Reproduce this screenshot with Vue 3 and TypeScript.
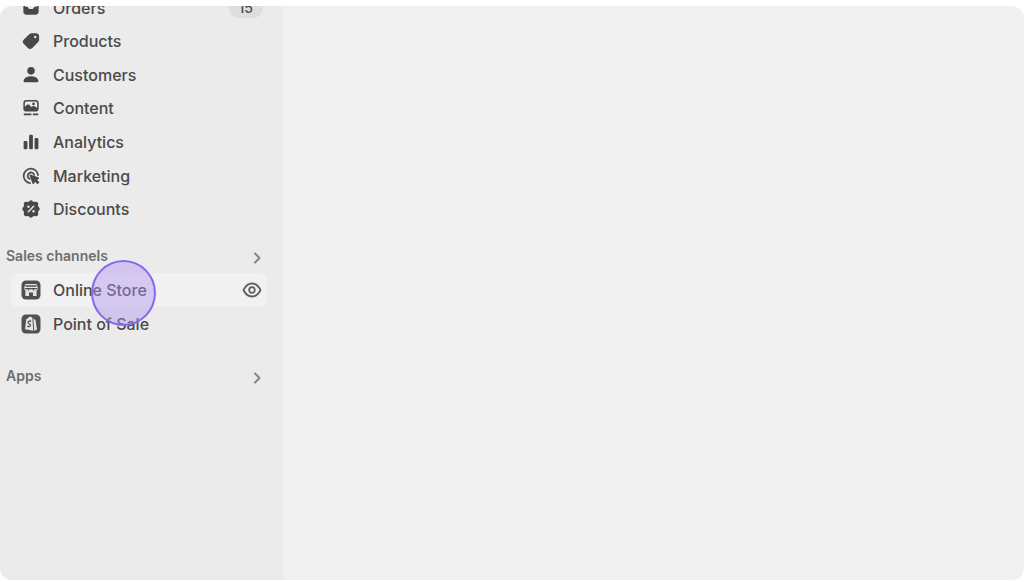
<script setup lang="ts">
type IconName = 'orders' | 'products' | 'customers' | 'content' | 'analytics' | 'marketing' | 'discounts'

interface NavItem {
  label: string
  icon: IconName
  count?: number
}

const items: NavItem[] = [
  { label: 'Orders', icon: 'orders', count: 15 },
  { label: 'Products', icon: 'products' },
  { label: 'Customers', icon: 'customers' },
  { label: 'Content', icon: 'content' },
  { label: 'Analytics', icon: 'analytics' },
  { label: 'Marketing', icon: 'marketing' },
  { label: 'Discounts', icon: 'discounts' },
]
</script>

<template>
  <div class="frame">
    <aside class="sidebar">
      <nav class="list main" aria-label="Main">
        <a v-for="item in items" :key="item.label" class="row" href="#">
          <svg class="icon" viewBox="0 0 20 20" aria-hidden="true">
            <path v-if="item.icon === 'orders'" fill-rule="evenodd" d="M5 1.500h10A3.500 3.500 0 0 1 18.500 5v9a3.500 3.500 0 0 1-3.500 3.500H5A3.500 3.500 0 0 1 1.500 14V5A3.500 3.500 0 0 1 5 1.500Zm0 2A1.500 1.500 0 0 0 3.500 5v3.500H6l2 2.500h4L14 8.500h2.500V5A1.500 1.500 0 0 0 15 3.500Z" />
            <path v-else-if="item.icon === 'products'" fill-rule="evenodd" d="M11.500 1.500H15.500A3.500 3.500 0 0 1 19 5V8.500C19 9.700 18.500 10.700 17.700 11.500L11.500 17.700A3.500 3.500 0 0 1 6.500 17.700L2.100 13.300A3.500 3.500 0 0 1 2.100 8.300L7.800 2.900C8.800 1.900 10 1.500 11.500 1.500ZM14.700 4.300a1.300 1.300 0 1 0 0 2.600 1.300 1.300 0 0 0 0-2.600Z" />
            <template v-else-if="item.icon === 'customers'">
              <circle cx="10" cy="5.400" r="4.200" />
              <path d="M1.800 16.200C2.800 13 5.800 11.500 10 11.500s7.200 1.500 8.200 4.700c.3 1-.4 1.800-1.400 1.800H3.200c-1 0-1.700-.8-1.400-1.800Z" />
            </template>
            <template v-else-if="item.icon === 'content'">
              <path fill-rule="evenodd" d="M5 1h10a3.500 3.500 0 0 1 3.500 3.500v6A3.500 3.500 0 0 1 15 14H5a3.500 3.500 0 0 1-3.500-3.500v-6A3.500 3.500 0 0 1 5 1Zm0 1.700c-1 0-1.800.8-1.800 1.800v4l2.300-2c.8-.7 1.700-.7 2.500 0L10.500 9l1.300-.9c.7-.5 1.500-.5 2.200 0l2.800 2V4.500c0-1-.8-1.800-1.800-1.800Z" />
              <circle cx="12.800" cy="5.500" r="1.500" />
              <path d="M2 16h8.500v2H2zM12 16h6v2h-6z" />
            </template>
            <template v-else-if="item.icon === 'analytics'">
              <rect x="1.800" y="9" width="4.200" height="9" rx="1.300" />
              <rect x="7.900" y="2" width="4.200" height="16" rx="1.300" />
              <rect x="14" y="5.500" width="4.200" height="12.500" rx="1.300" />
            </template>
            <template v-else-if="item.icon === 'marketing'">
              <path class="line" d="M9 17.800A8 8 0 1 1 17.800 9M8.500 13.200a3.700 3.700 0 1 1 5-4.500" />
              <path d="M9.200 8.400 18.600 11.600c.7.300.7 1.200 0 1.500l-1.800 1 2.600 2.800-2.200 2.300-2.900-2.700-1 2c-.3.700-1.200.7-1.500 0L8.300 9.300c-.2-.6.300-1.100.9-.9Z" />
            </template>
            <template v-else>
              <path d="M7.800 1.800Q10-1 12.200 1.800L13.200 2.200 15 2Q18.200 1.800 18 5L17.800 6.800 18.500 7.900Q21 10 18.500 12.100L17.800 13.200 18 15Q18.200 18.200 15 18L13.200 17.800 12.200 18.400Q10 21 7.800 18.400L6.800 17.800 5 18Q1.800 18.200 2 15L2.200 13.200 1.500 12.100Q-1 10 1.500 7.900L2.200 6.800 2 5Q1.800 1.800 5 2L6.800 2.200Z" />
              <path class="cut" d="m7 13 6-6" />
              <circle class="hole" cx="7.200" cy="7.500" r="1.300" />
              <circle class="hole" cx="12.800" cy="12.500" r="1.300" />
            </template>
          </svg>
          <span>{{ item.label }}</span>
          <span v-if="item.count" class="count">{{ item.count }}</span>
        </a>
      </nav>

      <button class="heading" type="button">
        <span>Sales channels</span>
        <svg class="chevron" viewBox="0 0 12 12" aria-hidden="true"><path d="m4 1.500 4.500 4.500L4 10.500" /></svg>
      </button>
      <nav class="list channels" aria-label="Sales channels">
        <div class="row selected">
          <a class="store" href="#">
            <svg class="icon" viewBox="0 0 20 20" aria-hidden="true">
              <rect x=".5" y=".5" width="19" height="19" rx="4.500" />
              <path class="hole" fill-rule="evenodd" d="M4.500 4h11L17 8.200c0 1-.5 1.800-1.400 2.200V16H12v-3.500H8V16H4.400v-5.600C3.500 10 3 9.200 3 8.200Z" />
              <path class="detail" d="M4.500 6h11M3.500 8.700h13M7.500 8.500v2M12.500 8.500v2" />
            </svg>
            <span>Online Store</span>
          </a>
          <button class="view" type="button" aria-label="View online store">
            <svg viewBox="0 0 20 20" aria-hidden="true">
              <path d="M1.500 10C3.500 5.800 6.300 3.500 10 3.500S16.500 5.800 18.500 10c-2 4.200-4.800 6.500-8.500 6.500S3.500 14.200 1.500 10Z" />
              <circle cx="10" cy="10" r="2.800" />
            </svg>
          </button>
        </div>
        <a class="row" href="#">
          <svg class="icon" viewBox="0 0 20 20" aria-hidden="true">
            <rect x=".5" y=".5" width="19" height="19" rx="4.500" />
            <path class="hole" d="m5.300 5 1.500-.4C7.500 3 8.500 2.500 9.600 3l1.700.2 1 13.500L4 15.300ZM12.300 4.500l2.300 1.700 1.400 9.500-2.700 1Z" />
            <path class="detail" d="M10.200 7.300C8.600 6.500 7 7.400 7.200 8.600c.2 1.200 2.200 1.300 2.100 2.700-.1 1.400-1.600 1.700-2.900.8" />
          </svg>
          <span>Point of Sale</span>
        </a>
        <span class="pointer" aria-hidden="true"></span>
      </nav>

      <button class="heading apps" type="button">
        <span>Apps</span>
        <svg class="chevron" viewBox="0 0 12 12" aria-hidden="true"><path d="m4 1.500 4.500 4.500L4 10.500" /></svg>
      </button>
    </aside>
    <main class="page"></main>
  </div>
</template>

<style>
body {
  background: #fff;
}
</style>

<style scoped>
.frame {
  display: flex;
  height: calc(100vh - 8px);
  margin: 6px 0 2px;
  overflow: hidden;
  border-radius: 12px;
  background: #f0f0f0;
  font-family: Inter, "Liberation Sans", sans-serif;
  font-size: 16px;
  font-weight: 500;
  line-height: 20px;
  color: #4a4a4a;
}
.sidebar {
  box-sizing: border-box;
  flex: none;
  width: 283px;
  padding-right: 16px;
  background: #ebebeb;
}
.page {
  flex: 1;
}
.list {
  position: relative;
  display: grid;
  grid-auto-rows: 1fr;
  margin-left: 10px;
}
.main {
  height: 235px;
  margin-top: -15px;
}
.channels {
  height: 68px;
}
.row,
.store {
  display: flex;
  align-items: center;
  color: inherit;
  text-decoration: none;
}
.row {
  padding: 0 4px 0 11px;
  border-radius: 8px;
}
.store {
  flex: 1;
}
.selected {
  padding-right: 5px;
  background: #f1f1f1;
}
.icon {
  flex: none;
  width: 20px;
  height: 20px;
  margin-right: 12px;
  fill: #505050;
}
.main .icon {
  width: 18px;
  height: 18px;
  margin: 0 13px 0 1px;
  overflow: visible;
  fill: #484848;
}
.icon .line {
  fill: none;
  stroke: #505050;
  stroke-width: 2;
  stroke-linecap: round;
}
.icon .cut {
  stroke: #ebebeb;
  stroke-width: 1.6;
  stroke-linecap: round;
}
.icon .hole,
.main .icon .hole {
  fill: #e4e4e4;
}
.icon .detail {
  fill: none;
  stroke: #505050;
  stroke-width: 1.3;
}
.count {
  margin-left: auto;
  padding: 0 10px;
  border-radius: 10px;
  background: #dedede;
  font-size: 14px;
}
button {
  padding: 0;
  border: 0;
  background: none;
  color: inherit;
  font: inherit;
}
.heading {
  display: flex;
  align-items: center;
  justify-content: space-between;
  width: 100%;
  height: 20px;
  margin: 20px 0 7px;
  padding: 0 4px 0 6px;
  color: #6e6e6e;
  font-size: 14px;
  font-weight: 600;
}
.apps {
  margin-top: 25px;
}
.chevron {
  width: 12px;
  height: 12px;
  margin-top: 4px;
  fill: none;
  stroke: #858585;
  stroke-width: 2;
  stroke-linecap: round;
  stroke-linejoin: round;
}
.view {
  display: flex;
}
.view svg {
  width: 20px;
  height: 20px;
  fill: none;
  stroke: #606060;
  stroke-width: 1.8;
}
/* Click highlight lying over the channel links */
.pointer {
  position: absolute;
  top: -13px;
  left: 81px;
  box-sizing: border-box;
  width: 65px;
  height: 66px;
  border: 2px solid #8468ed;
  border-radius: 50%;
  background: rgba(174, 145, 242, 0.42);
  pointer-events: none;
}
</style>
